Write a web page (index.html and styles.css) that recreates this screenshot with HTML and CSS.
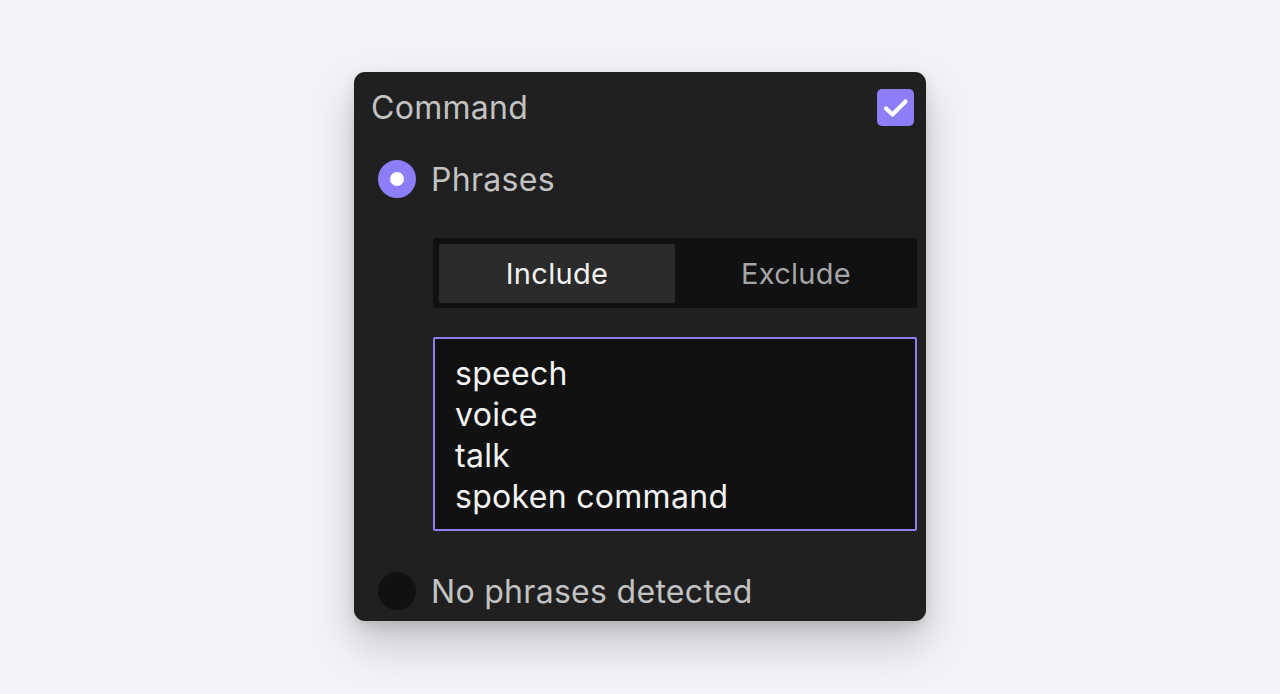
FILE: index.html
```html
<!DOCTYPE html>
<html>
<head>
<meta charset="utf-8">
<link rel="stylesheet" href="styles.css">
</head>
<body>
<div class="stage">
  <div class="card">
    <div class="header">
      <span class="title">Command</span>
      <span class="checkbox">
        <svg width="37" height="37" viewBox="0 0 37 37"><path d="M9 19.5 L15.5 25.5 L28.5 12.5" fill="none" stroke="#fff" stroke-width="4.2" stroke-linecap="round" stroke-linejoin="round"/></svg>
      </span>
    </div>
    <div class="option">
      <span class="radio on"></span>
      <span class="label">Phrases</span>
    </div>
    <div class="indent">
      <div class="segmented">
        <div class="seg active">Include</div>
        <div class="seg">Exclude</div>
      </div>
      <div class="phrases">
        <div>speech</div>
        <div>voice</div>
        <div>talk</div>
        <div>spoken command</div>
      </div>
    </div>
    <div class="option last">
      <span class="radio off"></span>
      <span class="label">No phrases detected</span>
    </div>
  </div>
</div>
</body>
</html>
```

FILE: styles.css
```css
html, body {
  margin: 0;
  padding: 0;
  background: #f2f3f7;
  font-family: Inter, "Noto Sans", sans-serif;
}
.stage {
  height: 694px;
  display: flex;
  justify-content: center;
  align-items: flex-start;
  padding-top: 72px;
  box-sizing: border-box;
}
.card {
  width: 572px;
  height: 549px;
  background: #202020;
  border-radius: 11px;
  overflow: hidden;
  box-shadow: 0 22px 44px rgba(0, 0, 0, 0.2), 0 6px 14px rgba(0, 0, 0, 0.1);
  box-sizing: border-box;
  padding: 17px 12px 0 17px;
  display: flex;
  flex-direction: column;
}
.header {
  display: flex;
  justify-content: space-between;
  align-items: center;
  height: 37px;
}
.title {
  font-size: 32px;
  letter-spacing: 0.3px;
  color: #c2c2c2;
}
.checkbox {
  width: 37px;
  height: 37px;
  border-radius: 5px;
  background: #8b7ef8;
  display: flex;
  align-items: center;
  justify-content: center;
}
.option {
  display: flex;
  align-items: center;
  gap: 15px;
  margin-top: 34px;
  padding-left: 7px;
  height: 38px;
}
.option.last {
  margin-top: 41px;
}
.radio {
  width: 38px;
  height: 38px;
  border-radius: 50%;
  box-sizing: border-box;
  flex: none;
}
.radio.on {
  border: 12px solid #8b7ef8;
  background: #fff;
}
.radio.off {
  background: #111111;
}
.label {
  font-size: 32px;
  letter-spacing: 0.3px;
  color: #c2c2c2;
}
.indent {
  margin-left: 62px;
  margin-right: -3px;
  margin-top: 40px;
  display: flex;
  flex-direction: column;
  gap: 29px;
}
.segmented {
  background: #111111;
  border-radius: 3px;
  padding: 6px 0 5px 6px;
  display: flex;
  height: 70px;
  box-sizing: border-box;
}
.seg {
  flex: 1;
  display: flex;
  align-items: center;
  justify-content: center;
  font-size: 29px;
  letter-spacing: 0.3px;
  color: #a5a5a5;
}
.seg.active {
  flex: none;
  width: 236px;
  background: #2b2b2b;
  color: #f2f2f2;
  border-radius: 2px;
}
.phrases {
  height: 194px;
  box-sizing: border-box;
  border: 2px solid #8c80f2;
  border-radius: 2px;
  background: #111111;
  padding: 14px 20px 12px;
  font-size: 32px;
  letter-spacing: 0.3px;
  line-height: 41px;
  color: #f4f4f4;
}
```
